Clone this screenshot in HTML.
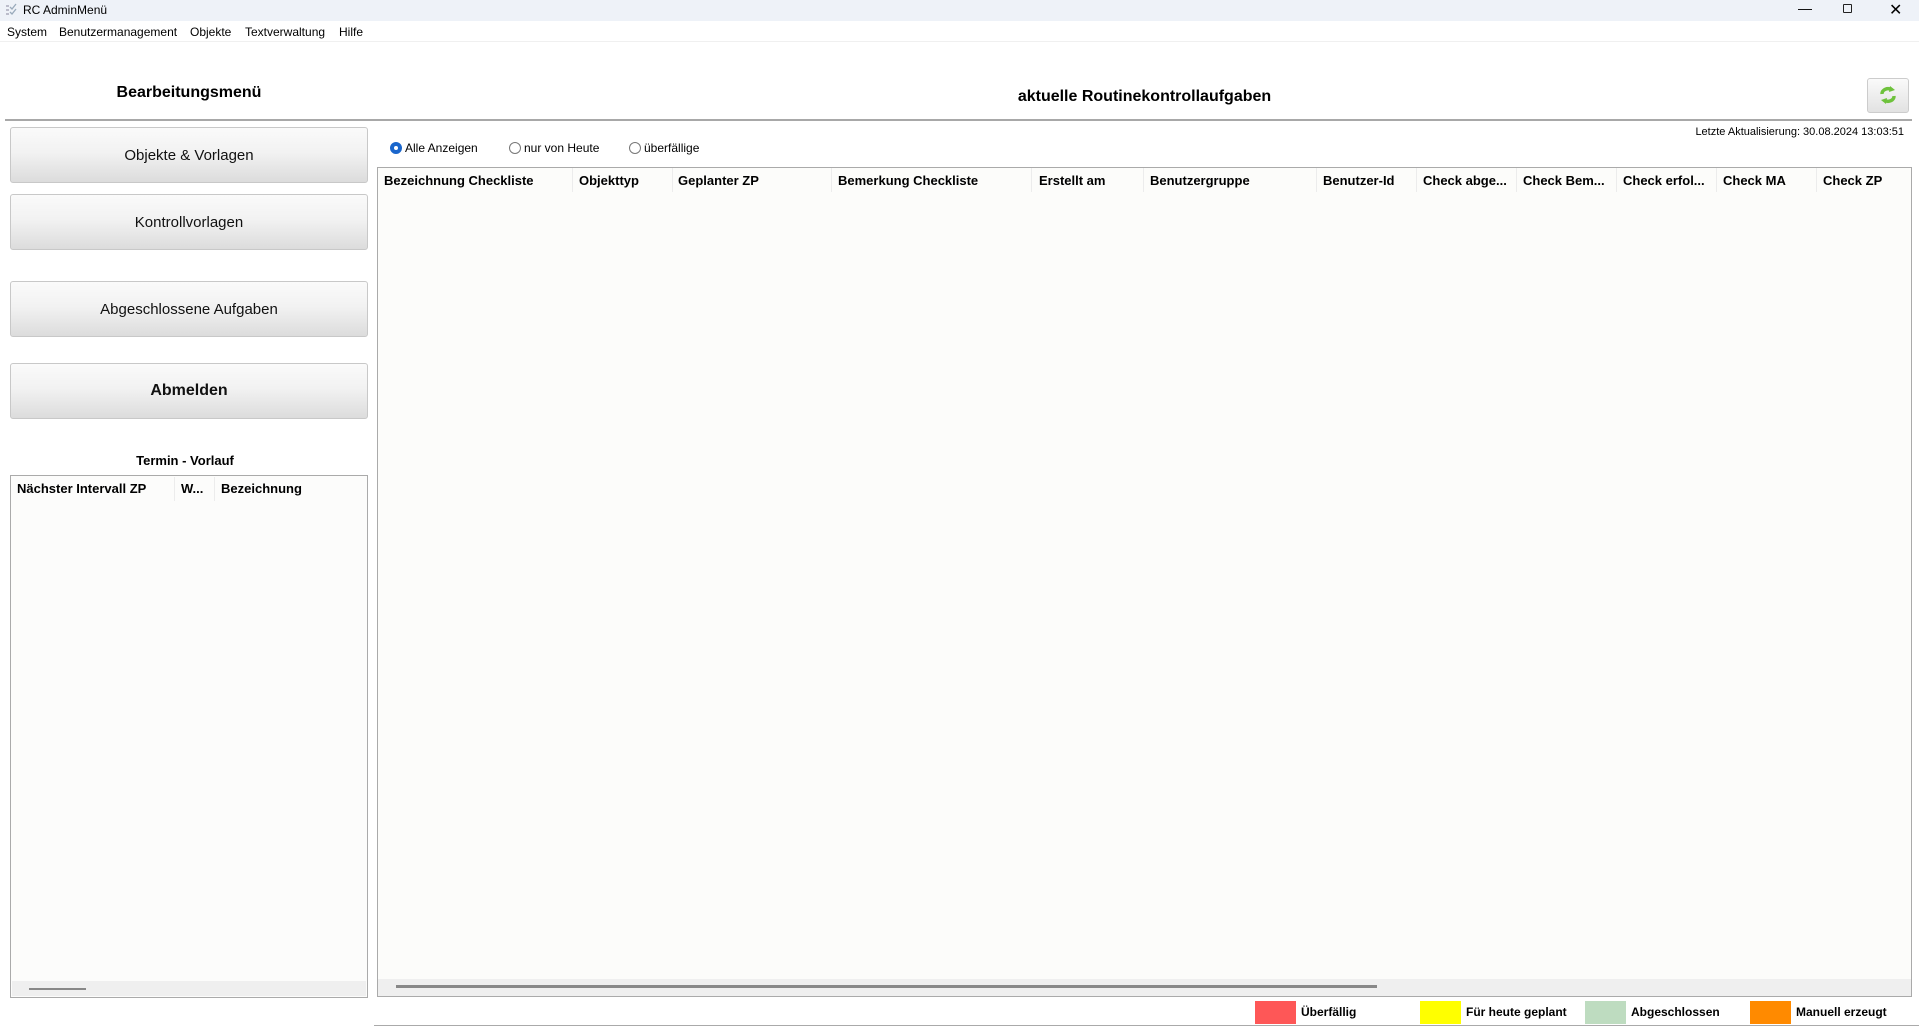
<!DOCTYPE html>
<html><head><meta charset="utf-8"><style>
*{margin:0;padding:0;box-sizing:border-box}
body{width:1919px;height:1031px;position:relative;background:#fff;font-family:"Liberation Sans","DejaVu Sans",sans-serif;overflow:hidden;color:#000}
.a{position:absolute;white-space:nowrap}
.btn{position:absolute;left:10px;width:358px;height:56px;border:1px solid #c8c8c8;border-radius:3px;background:linear-gradient(#fafafa 0%,#f2f2f2 45%,#dcdcdc 100%);font-size:15px;display:flex;align-items:center;justify-content:center;color:#111}
.h{position:absolute;top:172px;font-size:13px;font-weight:bold;height:18px;line-height:18px}
.sep{position:absolute;top:168px;width:1px;height:24px;background:#ececec}
.lg{position:absolute;top:1001px;width:41px;height:23px}
.lt{position:absolute;top:1005px;font-size:12px;font-weight:bold}
.rad{display:inline-block;width:12px;height:12px;border:1px solid #777;border-radius:50%;vertical-align:-2px;margin-right:3px;background:#fff}
</style></head><body>
<div class="a" style="left:0;top:0;width:1919px;height:21px;background:#eef2f8"></div>
<svg class="a" style="left:4px;top:3px" width="14" height="14" viewBox="0 0 14 14"><path d="M2 3h3M2 7h3M2 11h3" stroke="#aab" stroke-width="1.5"/><path d="M6 4l2 2 4-5M6 9l2 2 4-5" stroke="#9ab" stroke-width="1.3" fill="none"/></svg>
<div class="a" style="left:23px;top:3px;font-size:12px">RC AdminMenü</div>
<div class="a" style="left:1798px;top:0;font-size:14px">&#8212;</div>
<div class="a" style="left:1843px;top:4px;width:9px;height:9px;border:1px solid #222;border-radius:1px"></div>
<div class="a" style="left:1889px;top:0;font-size:16px">&#10005;</div>
<div class="a" style="left:7px;top:25px;font-size:12px">System</div>
<div class="a" style="left:59px;top:25px;font-size:12px">Benutzermanagement</div>
<div class="a" style="left:190px;top:25px;font-size:12px">Objekte</div>
<div class="a" style="left:245px;top:25px;font-size:12px">Textverwaltung</div>
<div class="a" style="left:339px;top:25px;font-size:12px">Hilfe</div>
<div class="a" style="left:0;top:41px;width:1919px;height:1px;background:#f0f0f0"></div>
<div class="a" style="left:0;top:84px;width:378px;text-align:center;font-size:16px;font-weight:bold">Bearbeitungsmenü</div>
<div class="a" style="left:377px;top:88px;width:1535px;text-align:center;font-size:16px;font-weight:bold">aktuelle Routinekontrollaufgaben</div>
<div class="a" style="left:1867px;top:78px;width:42px;height:35px;border:1px solid #ccc;border-radius:3px;background:linear-gradient(#fafafa,#e2e2e2)"></div>
<svg class="a" style="left:1879px;top:85px" width="18" height="20" viewBox="0 0 18 20"><path d="M3 9 A6 5 0 0 1 13 5" stroke="#6ec23c" stroke-width="3.5" fill="none"/><path d="M11 1l5 4-6 2z" fill="#6ec23c"/><path d="M15 11 A6 5 0 0 1 5 15" stroke="#6ec23c" stroke-width="3.5" fill="none"/><path d="M7 19l-5-4 6-2z" fill="#6ec23c"/></svg>
<div class="a" style="left:5px;top:119px;width:1907px;height:2px;background:#a8a8a8"></div>
<div class="a" style="right:15px;top:126px;font-size:11px">Letzte Aktualisierung: 30.08.2024 13:03:51</div>
<div class="btn" style="top:127px">Objekte &amp; Vorlagen</div>
<div class="btn" style="top:194px">Kontrollvorlagen</div>
<div class="btn" style="top:281px">Abgeschlossene Aufgaben</div>
<div class="btn" style="top:363px;font-weight:bold;font-size:16px">Abmelden</div>
<div class="a" style="left:0;top:453px;width:370px;text-align:center;font-size:13px;font-weight:bold">Termin - Vorlauf</div>
<div class="a" style="left:10px;top:475px;width:358px;height:523px;border:1px solid #aaa;background:#fcfcfb"></div>
<div class="a" style="left:17px;top:481px;font-size:13px;font-weight:bold">Nächster Intervall ZP</div>
<div class="a" style="left:174px;top:477px;width:1px;height:24px;background:#ececec"></div>
<div class="a" style="left:181px;top:481px;font-size:13px;font-weight:bold">W...</div>
<div class="a" style="left:214px;top:477px;width:1px;height:24px;background:#ececec"></div>
<div class="a" style="left:221px;top:481px;font-size:13px;font-weight:bold">Bezeichnung</div>
<div class="a" style="left:12px;top:981px;width:354px;height:15px;background:#efefef"></div>
<div class="a" style="left:29px;top:988px;width:57px;height:2px;background:#888"></div>
<div class="a" style="left:390px;top:141px;font-size:12px"><span class="rad" style="border:4px solid #1a66cc"></span>Alle Anzeigen</div>
<div class="a" style="left:509px;top:141px;font-size:12px"><span class="rad"></span>nur von Heute</div>
<div class="a" style="left:629px;top:141px;font-size:12px"><span class="rad"></span>überfällige</div>
<div class="a" style="left:377px;top:167px;width:1535px;height:830px;border:1px solid #aaa;background:#fcfcfa"></div>
<div class="h" style="left:384px">Bezeichnung Checkliste</div>
<div class="sep" style="left:572px"></div>
<div class="h" style="left:579px">Objekttyp</div>
<div class="sep" style="left:672px"></div>
<div class="h" style="left:678px">Geplanter ZP</div>
<div class="sep" style="left:831px"></div>
<div class="h" style="left:838px">Bemerkung Checkliste</div>
<div class="sep" style="left:1031px"></div>
<div class="h" style="left:1039px">Erstellt am</div>
<div class="sep" style="left:1143px"></div>
<div class="h" style="left:1150px">Benutzergruppe</div>
<div class="sep" style="left:1316px"></div>
<div class="h" style="left:1323px">Benutzer-Id</div>
<div class="sep" style="left:1416px"></div>
<div class="h" style="left:1423px">Check abge...</div>
<div class="sep" style="left:1516px"></div>
<div class="h" style="left:1523px">Check Bem...</div>
<div class="sep" style="left:1616px"></div>
<div class="h" style="left:1623px">Check erfol...</div>
<div class="sep" style="left:1716px"></div>
<div class="h" style="left:1723px">Check MA</div>
<div class="sep" style="left:1816px"></div>
<div class="h" style="left:1823px">Check ZP</div>
<div class="a" style="left:378px;top:979px;width:1533px;height:17px;background:#efefef"></div>
<div class="a" style="left:396px;top:985px;width:981px;height:3px;background:#888"></div>
<div class="lg" style="left:1255px;background:#fe5757"></div>
<div class="lt" style="left:1301px">Überfällig</div>
<div class="lg" style="left:1420px;background:#ffff00"></div>
<div class="lt" style="left:1466px">Für heute geplant</div>
<div class="lg" style="left:1585px;background:#bedcc0"></div>
<div class="lt" style="left:1631px">Abgeschlossen</div>
<div class="lg" style="left:1750px;background:#ff8a00"></div>
<div class="lt" style="left:1796px">Manuell erzeugt</div>
<div class="a" style="left:374px;top:1025px;width:1545px;height:1px;background:#aaa"></div>
</body></html>
